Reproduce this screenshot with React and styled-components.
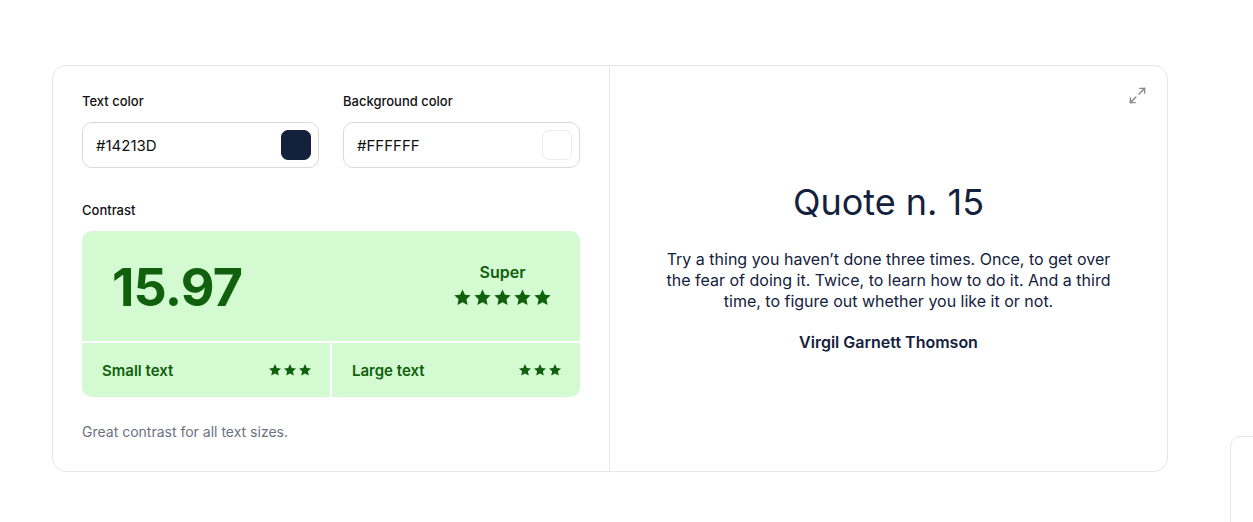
import styled, { createGlobalStyle } from 'styled-components';
import { Maximize2 } from 'lucide-react';

const GlobalStyle = createGlobalStyle`
  body {
    margin: 0;
    background: #ffffff;
    font-family: Inter, "Noto Sans", sans-serif;
    color: #14213D;
  }
`;

const Star = ({ size }) => (
  <svg width={size} height={size} viewBox="0 0 24 24" fill="#11600D">
    <path d="M12 1.8l3.1 6.6 7.2.9-5.3 5 1.4 7.1L12 17.9l-6.4 3.5L7 14.3l-5.3-5 7.2-.9z" />
  </svg>
);

const Stars = ({ count, size, gap }) => (
  <StarRow $gap={gap}>
    {Array.from({ length: count }).map((_, i) => <Star key={i} size={size} />)}
  </StarRow>
);

const ColorField = ({ label, value, swatch }) => (
  <Field>
    <Label>{label}</Label>
    <InputBox>
      <InputText>{value}</InputText>
      <Swatch $color={swatch} />
    </InputBox>
  </Field>
);

const App = () => {
  return (
    <>
      <GlobalStyle />
      <Page>
        <Card>
          <LeftPanel>
            <Fields>
              <ColorField label="Text color" value="#14213D" swatch="#14213D" />
              <ColorField label="Background color" value="#FFFFFF" swatch="#FFFFFF" />
            </Fields>
            <ContrastLabel>Contrast</ContrastLabel>
            <ContrastBox>
              <ScoreRow>
                <Score>15.97</Score>
                <Rating>
                  <RatingName>Super</RatingName>
                  <Stars count={5} size={19} gap={1} />
                </Rating>
              </ScoreRow>
              <SizeCell>
                <SizeName>Small text</SizeName>
                <Stars count={3} size={14} gap={1} />
              </SizeCell>
              <SizeCell>
                <SizeName>Large text</SizeName>
                <Stars count={3} size={14} gap={1} />
              </SizeCell>
            </ContrastBox>
            <Note>Great contrast for all text sizes.</Note>
          </LeftPanel>
          <RightPanel>
            <ExpandButton>
              <Maximize2 size={19} strokeWidth={1.8} />
            </ExpandButton>
            <QuoteTitle>Quote n. 15</QuoteTitle>
            <QuoteText>
              Try a thing you haven’t done three times. Once, to get over the fear of doing it. Twice, to learn how to do it. And a third time, to figure out whether you like it or not.
            </QuoteText>
            <Author>Virgil Garnett Thomson</Author>
          </RightPanel>
        </Card>
      </Page>
      <FloatingCard />
    </>
  );
};

const Page = styled.div`
  padding: 65px 0 0 52px;
`;

const Card = styled.div`
  width: 1116px;
  height: 407px;
  box-sizing: border-box;
  border: 1px solid #e5e7eb;
  border-radius: 14px;
  display: grid;
  grid-template-columns: 557px 1fr;
  overflow: hidden;
`;

const LeftPanel = styled.div`
  padding: 27px 29px 0 29px;
  border-right: 1px solid #e5e7eb;
  display: flex;
  flex-direction: column;
`;

const Fields = styled.div`
  display: grid;
  grid-template-columns: 1fr 1fr;
  gap: 24px;
`;

const Field = styled.div`
  display: flex;
  flex-direction: column;
`;

const Label = styled.div`
  font-size: 13px;
  font-weight: 500;
  line-height: 16px;
  color: #111111;
  margin-bottom: 13px;
`;

const InputBox = styled.div`
  height: 46px;
  box-sizing: border-box;
  border: 1px solid #d9d9d9;
  border-radius: 10px;
  display: flex;
  align-items: center;
  justify-content: space-between;
  padding: 0 7px 0 13px;
`;

const InputText = styled.span`
  font-size: 15px;
  color: #111111;
`;

const Swatch = styled.div`
  width: 30px;
  height: 30px;
  border-radius: 7px;
  background: ${({ $color }) => $color};
  box-sizing: border-box;
  border: 1px solid ${({ $color }) => ($color === '#FFFFFF' ? '#ececec' : $color)};
`;

const ContrastLabel = styled.div`
  font-size: 13px;
  font-weight: 500;
  line-height: 16px;
  color: #111111;
  margin: 34px 0 13px;
`;

const ContrastBox = styled.div`
  display: grid;
  grid-template-columns: 1fr 1fr;
  grid-template-rows: 110px 54px;
  gap: 2px;
  border-radius: 10px;
  overflow: hidden;
`;

const ScoreRow = styled.div`
  grid-column: 1 / 3;
  background: #D3FAD1;
  display: flex;
  align-items: center;
  justify-content: space-between;
  padding: 0 28px 0 30px;
`;

const Score = styled.div`
  font-size: 52px;
  font-weight: 700;
  letter-spacing: -0.8px;
  color: #11600D;
  margin-top: 2px;
`;

const Rating = styled.div`
  display: flex;
  flex-direction: column;
  align-items: center;
  gap: 6px;
  margin-top: -3px;
`;

const RatingName = styled.div`
  font-size: 16px;
  font-weight: 600;
  color: #11600D;
`;

const StarRow = styled.div`
  display: flex;
  gap: ${({ $gap }) => $gap}px;
`;

const SizeCell = styled.div`
  background: #D3FAD1;
  display: flex;
  align-items: center;
  justify-content: space-between;
  padding: 0 18px 0 20px;
`;

const SizeName = styled.div`
  font-size: 15px;
  font-weight: 600;
  color: #11600D;
`;

const Note = styled.div`
  margin-top: 26px;
  font-size: 14px;
  color: #6b7280;
`;

const RightPanel = styled.div`
  position: relative;
  display: flex;
  flex-direction: column;
  align-items: center;
  justify-content: center;
  padding-bottom: 5px;
`;

const ExpandButton = styled.div`
  position: absolute;
  top: 20px;
  right: 20px;
  color: #8a8a8a;
  display: flex;
`;

const QuoteTitle = styled.h1`
  margin: 0;
  font-size: 36px;
  font-weight: 400;
  line-height: 44px;
  color: #14213D;
`;

const QuoteText = styled.p`
  margin: 25px 0 0;
  max-width: 452px;
  text-align: center;
  font-size: 16px;
  line-height: 21px;
  color: #14213D;
`;

const Author = styled.div`
  margin-top: 20px;
  font-size: 16px;
  font-weight: 600;
  line-height: 21px;
  color: #14213D;
`;

const FloatingCard = styled.div`
  position: fixed;
  left: 1230px;
  top: 436px;
  width: 60px;
  height: 120px;
  border: 1px solid #e5e7eb;
  border-radius: 10px;
  background: #fff;
`;

export default App;
